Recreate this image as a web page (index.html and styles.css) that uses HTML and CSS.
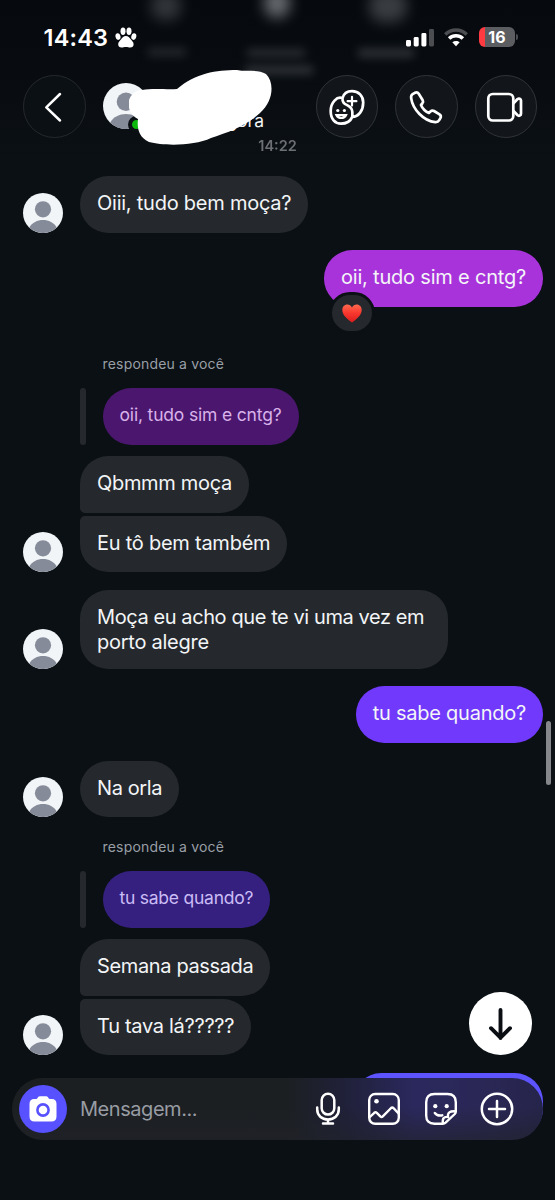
FILE: index.html
```html
<!DOCTYPE html>
<html lang="pt-BR">
<head>
<meta charset="utf-8">
<title>Mensagens</title>
<link rel="stylesheet" href="styles.css">
</head>
<body>
<svg class="defs" width="0" height="0">
  <symbol id="person" viewBox="0 0 40 40">
    <circle cx="20" cy="20" r="20" fill="#f1f5f8"/>
    <circle cx="20" cy="16.3" r="8.1" fill="#858b98"/>
    <path d="M6.2 34.5C9.2 29.5 14.2 27 20 27s10.800 2.500 13.800 7.500A20 20 0 0 1 6.200 34.500z" fill="#858b98"/>
  </symbol>
</svg>
<div class="phone">
  <div class="ghosts">
    <i class="ghost g1"></i><i class="ghost g2"></i><i class="ghost g3"></i>
    <i class="ghost g4"></i><i class="ghost g5"></i><i class="ghost g6"></i><i class="ghost g7"></i>
  </div>

  <div class="status">
    <span class="clock">14:43</span>
    <svg class="paw" width="22" height="21" viewBox="0 0 22 21" fill="#fff">
      <ellipse cx="8" cy="4.200" rx="2.500" ry="3.700"/><ellipse cx="14" cy="4.200" rx="2.500" ry="3.700"/>
      <ellipse cx="3" cy="9.600" rx="2.500" ry="3.300" transform="rotate(-12 3 9.600)"/><ellipse cx="18.800" cy="9.600" rx="2.500" ry="3.300" transform="rotate(12 18.800 9.600)"/>
      <path d="M10.900 8.900c2.400 0 3.500 1.600 4.800 3.300 1.500 1.900 2.900 2.900 2.900 5 0 2.200-1.400 3.300-3.400 3.300-1.500 0-2.400-.5-4.300-.5s-2.800.5-4.300.5c-2 0-3.400-1.100-3.400-3.300 0-2.100 1.400-3.100 2.900-5 1.300-1.700 2.400-3.300 4.800-3.300z"/>
    </svg>
    <svg class="signal" width="29" height="19" viewBox="0 0 29 19" fill="#fff">
      <rect x="0" y="12" width="5" height="6.500" rx="1.400"/><rect x="7.700" y="9" width="5" height="9.500" rx="1.400"/>
      <rect x="15.400" y="5" width="5" height="13.500" rx="1.400"/><rect x="23" y="1" width="5" height="17.500" rx="1.400" fill="#4b4d50"/>
    </svg>
    <svg class="wifi" width="24" height="19" viewBox="0 0 24 19" fill="none" stroke-width="3.500">
      <path d="M1.300 6.500C7.300.6 16.700.6 22.700 6.500" stroke="#4b4d50"/>
      <path d="M5.100 10.600c4-3.800 9.800-3.800 13.800 0" stroke="#fff"/>
      <path d="M8.300 14.300c2.200-1.900 5.200-1.900 7.400 0L12 18.200z" fill="#fff"/>
    </svg>
    <div class="battery"><span>16</span></div>
  </div>

  <header class="nav">
    <div class="round back">
      <svg width="62" height="62" viewBox="0 0 62 62" fill="none" stroke="#fff" stroke-width="2.500" stroke-linecap="round" stroke-linejoin="round"><path d="M36 18 22.300 31.300 36 44.500"/></svg>
    </div>
    <div class="profile">
      <svg class="face" width="46" height="46"><use href="#person"/></svg>
      <i class="online"></i>
      <span class="active">agora</span>
      <svg class="scribble" width="146" height="78" viewBox="0 0 146 78"><path fill="#fff" d="M13 21C25 19 39 21 48 20C67 4 87 1 108 1C117 3 129 0 137 5C146 14 144 33 131 44C117 57 100 63 82 69C65 77 35 77 20 73C9 68 8 58 9 50C-2 45-3 30 4 25Q7 21 13 21z"/></svg>
    </div>
    <div class="round">
      <svg width="62" height="62" viewBox="0 0 62 62" fill="none" stroke="#fff" stroke-width="2.700" stroke-linecap="round">
        <path d="M26.500 22.200C21 20 14.700 26.500 14.700 35c0 8 4.300 12.700 10.300 12.700 5.600 0 9.500-2.600 11.300-6.800M26.500 22.200c1.100-4.200 4.700-7 9.500-7 6.700 0 11.200 4.700 11.200 11.200 0 8-4.500 14.500-10.900 14.500M26.500 22.200c-.9 8.500 9.500 5.300 9.800 13.500.1 1.800 0 3.500 0 5.200"/>
        <path d="M36 20.800v8.800M31.600 25.200h8.800M20.500 39.200c1.800 3.700 7.700 3.700 9.500 0z" stroke-width="2.200"/>
        <circle cx="21.800" cy="34.500" r="1.600" fill="#fff" stroke="none"/><circle cx="28.400" cy="34.500" r="1.600" fill="#fff" stroke="none"/>
      </svg>
    </div>
    <div class="round">
      <svg width="62" height="62" viewBox="0 0 62 62" fill="none" stroke="#fff" stroke-width="2.700" stroke-linejoin="round"><path d="M18.900 16.800l-2.300 1.400c-1.500.9-1.700 2.200-1.400 4.200 1.600 11 12.500 22.700 24 23.700 2.300.2 3.200-.5 4-1.900l1.300-2.300c.7-1.500.3-2.600-1-3.500l-5.500-3.400c-1.400-.8-2.500-.5-3.600.5l-1.500 1.400c-3.200-1.300-6.600-4.700-7.900-7.900l1.300-1.500c.9-1.100 1.100-2.200.3-3.500L22.700 17.700c-1-1.500-2.300-1.700-3.800-.9z"/></svg>
    </div>
    <div class="round">
      <svg width="62" height="62" viewBox="0 0 62 62" fill="none" stroke="#fff" stroke-width="2.700" stroke-linejoin="round"><rect x="13.300" y="18" width="25" height="26.500" rx="4.500"/><path d="M38.300 27.500l4.300-4.500c1.300-1 3.400-.3 3.400 1.500v13.300c0 1.800-2.100 2.500-3.400 1.500l-4.300-4.500"/></svg>
    </div>
  </header>

  <main class="chat">
    <div class="time">14:22</div>
    <div class="row first"><svg class="avatar"><use href="#person"/></svg><div class="bubble s1">Oiii, tudo bem moça?</div></div>
    <div class="row mine"><div class="bubble magenta s2">oii, tudo sim e cntg?
      <span class="reaction"><svg width="20" height="19" viewBox="0 0 20 19"><defs><linearGradient id="h" x2="0" y2="1"><stop stop-color="#ff6a50"/><stop offset=".45" stop-color="#fa392f"/><stop offset="1" stop-color="#d91b1d"/></linearGradient></defs><path fill="url(#h)" d="M10 18.600C5 14.800.3 10.800.3 5.900.3 2.800 2.500.5 5.300.5 7.400.5 9 1.600 10 3.600 11 1.600 12.600.5 14.700.5c2.800 0 5 2.300 5 5.400 0 4.900-4.700 8.900-9.700 12.700z"/></svg></span></div></div>
    <div class="replied far">respondeu a você</div>
    <div class="quote"><div class="bubble plum s3">oii, tudo sim e cntg?</div></div>
    <div class="row after-quote"><div class="bubble top s4">Qbmmm moça</div></div>
    <div class="row joined"><svg class="avatar"><use href="#person"/></svg><div class="bubble bottom s5">Eu tô bem também</div></div>
    <div class="row"><svg class="avatar"><use href="#person"/></svg><div class="bubble s6">Moça eu acho que te vi uma vez em<br><span class="line2">porto alegre</span></div></div>
    <div class="row mine"><div class="bubble violet s7">tu sabe quando?</div></div>
    <div class="row"><svg class="avatar"><use href="#person"/></svg><div class="bubble s8">Na orla</div></div>
    <div class="replied">respondeu a você</div>
    <div class="quote"><div class="bubble indigo s9">tu sabe quando?</div></div>
    <div class="row after-quote"><div class="bubble top s10">Semana passada</div></div>
    <div class="row joined"><svg class="avatar"><use href="#person"/></svg><div class="bubble bottom s11">Tu tava lá?????</div></div>
    <div class="row mine"><div class="bubble blue"></div></div>
  </main>

  <i class="scrollbar"></i>
  <div class="jump"><svg width="63" height="63" viewBox="0 0 63 63" fill="none" stroke="#0b0f14" stroke-width="3.900" stroke-linecap="round" stroke-linejoin="round"><path d="M31.500 18v28M22 36.200l9.500 9.500 9.500-9.500"/></svg></div>

  <footer class="composer">
    <div class="camera"><svg width="28" height="26" viewBox="0 0 28 26"><path fill="#fff" d="M8.500 2C9.300.6 10.400.3 12 .3h4c1.600 0 2.700.3 3.500 1.700.4.800.8 1 1.800 1h1.500c3 0 4.700 1.700 4.700 4.700V20.500c0 3.300-1.700 5-5 5h-17c-3.300 0-5-1.700-5-5V7.700C.5 4.700 2.200 3 5.200 3h1.500c1 0 1.400-.2 1.800-1z"/><circle cx="14" cy="14" r="5.600" fill="none" stroke="#5851ff" stroke-width="2.600"/></svg></div>
    <span class="placeholder">Mensagem...</span>
    <div class="tools">
      <svg width="34" height="34" viewBox="0 0 34 34" fill="none" stroke="#fff" stroke-width="2.500" stroke-linecap="round"><rect x="10.700" y="1.800" width="12.600" height="20.800" rx="6.300"/><path d="M6.200 15.500v1.800c0 6.200 4.600 10.200 10.800 10.200s10.800-4 10.800-10.200v-1.800M17 27.500v4M12 31.600h10"/></svg>
      <svg width="34" height="34" viewBox="0 0 34 34" fill="none" stroke="#fff" stroke-width="2.400" stroke-linejoin="round"><rect x="2.200" y="2" width="29.600" height="29.800" rx="6"/><path d="M2.300 25.500l5-4.700q1.300-1 2.500.1l3.500 3.500q1.300 1.200 2.500 0l8.300-8.400q1.100-1 2.300 0l5.400 5.700"/><circle cx="9.500" cy="9.300" r="2.300" fill="#fff" stroke="none"/></svg>
      <svg width="34" height="34" viewBox="0 0 34 34" fill="none" stroke="#fff" stroke-width="2.400" stroke-linejoin="round" stroke-linecap="round"><path d="M18.800 31.700H10.500c-5.500 0-8.300-2.800-8.300-8.300V10.300c0-5.500 2.800-8.300 8.300-8.300h13c5.500 0 8.300 2.800 8.300 8.300v9.200c0 1-.3 1.700-1 2.500l-9.200 8.700c-.8.700-1.700 1-2.800 1zM18.800 31.700c-.5-5.700 1.200-7.200 5.200-6.700-.7-4.300 1.800-6.200 7.700-5.700M10.800 21c1.600 2.200 4.300 3 7.500 2.300"/><circle cx="11.300" cy="14.200" r="2.100" fill="#fff" stroke="none"/><circle cx="22.700" cy="14.200" r="2.100" fill="#fff" stroke="none"/></svg>
      <svg width="34" height="34" viewBox="0 0 34 34" fill="none" stroke="#fff" stroke-width="2.500" stroke-linecap="round"><circle cx="17" cy="17" r="15.200"/><path d="M17 9v16M9 17h16"/></svg>
    </div>
  </footer>
</div>
</body>
</html>
```
FILE: styles.css
```css
* { box-sizing: border-box; }
body { margin: 0; background: #0b1014; color: #f3f5f7; font-family: Inter, "Liberation Sans", sans-serif; }
svg { display: block; flex: none; }
.defs { position: absolute; }
.phone { position: relative; width: 555px; height: 1200px; overflow: hidden; background: linear-gradient(#06090d 0, #080c11 70px, #0b1014 160px); }

.ghosts { position: absolute; inset: 0; }
.ghost { position: absolute; background: #85898d; filter: blur(7px); opacity: .34; }
.g1 { left: 151px; top: -8px; width: 30px; height: 28px; border-radius: 12px; }
.g2 { left: 264px; top: -12px; width: 26px; height: 30px; border-radius: 13px; opacity: .75; }
.g3 { left: 369px; top: -10px; width: 38px; height: 32px; border-radius: 14px; opacity: .4; }
.g4 { left: 148px; top: 48px; width: 38px; height: 8px; opacity: .24; filter: blur(5px); }
.g5 { left: 247px; top: 49px; width: 58px; height: 8px; opacity: .28; filter: blur(5px); }
.g6 { left: 245px; top: 66px; width: 68px; height: 8px; opacity: .34; filter: blur(5px); }
.g7 { left: 358px; top: 49px; width: 56px; height: 8px; opacity: .34; filter: blur(5px); }

.status { position: relative; display: flex; align-items: center; height: 75px; padding: 0 40px 1px 43.500px; }
.clock { width: 66px; font-size: 23.500px; font-weight: 600; letter-spacing: .2px; color: #fff; }
.paw { margin-left: 5.500px; }
.signal { margin-left: auto; }
.wifi { margin-left: 9px; }
.battery { position: relative; width: 36px; height: 20px; margin-left: 11px; border-radius: 6px; background: linear-gradient(90deg, #ff3b41 6px, #5c5d61 6px); color: #fff; text-align: center; font: 700 16px/20px Inter, sans-serif; }
.battery::after { content: ""; position: absolute; left: 37px; top: 7px; width: 2px; height: 6px; border-radius: 0 2px 2px 0; background: #4b4d50; }

.nav { position: relative; display: flex; gap: 17px; height: 63px; padding: 0 18px 0 23px; }
.round { width: 62.500px; height: 62.500px; border: 1px solid #303438; border-radius: 50%; background: #12161a; flex: none; }
.round > svg { margin: -.5px; }
.back { background: #0b1014; border-color: #25292e; }
.profile { position: relative; flex: 1; }
.face { margin-top: 8px; }
.online { position: absolute; left: 25px; top: 41px; width: 17px; height: 17px; border: 4px solid #0b1014; border-radius: 50%; background: #0db80d; }
.active { position: absolute; right: 34.500px; top: 35.500px; font-size: 17.500px; line-height: 20px; }
.scribble { position: absolute; left: 26px; top: -6px; }

.chat { position: relative; padding: 0 12px 0 23px; }
.time { height: 16px; text-align: center; font-size: 14.500px; line-height: 16px; font-weight: 600; color: #6c7074; filter: blur(.6px); transform: translateX(-5.500px); }
.row { position: relative; display: flex; justify-content: flex-start; align-items: flex-end; margin-top: 17.500px; padding-left: 57px; }
.row.first { margin-top: 22px; }
.row.mine { justify-content: flex-end; }
.row.after-quote { margin-top: 11.500px; }
.row.joined { margin-top: 3px; }
.avatar { width: 40px; height: 40px; margin-left: -57px; margin-right: 17px; }
.bubble { position: relative; min-height: 56.600px; padding: 15px 17px 13px; border-radius: 28.300px; background: #25292d; font-size: 20px; line-height: 25.500px; white-space: nowrap; }
.top { border-bottom-left-radius: 5px; }
.bottom { border-top-left-radius: 5px; }
.magenta { background: #a933db; }
.violet { background: #7139fb; }
.plum { background: #4b176e; color: #d8b2ea; }
.indigo { background: #352080; color: #cbbcf5; }
.blue { background: #5d54ff; width: 190px; height: 64px; }

/* optical tracking per message */
.s1 { letter-spacing: -.24px; }
.s2 { letter-spacing: -.2px; }
.s3 { letter-spacing: -.17px; }
.s4 { letter-spacing: -.32px; }
.s5 { letter-spacing: -.25px; }
.s6 { width: 368px; letter-spacing: -.41px; }
.line2 { letter-spacing: -.25px; }
.s7 { letter-spacing: -.24px; }
.s8 { letter-spacing: -.4px; }
.s9 { letter-spacing: -.24px; }
.s10 { letter-spacing: -.36px; }
.s11 { letter-spacing: -.3px; }

.reaction { position: absolute; left: 5px; top: 42px; display: flex; align-items: center; justify-content: center; width: 46px; height: 42px; border: 3px solid #0b1014; border-radius: 21px; background: #25292d; }
.replied { height: 20px; margin: 20px 0 14px 79.500px; font-size: 14px; line-height: 20px; letter-spacing: .18px; color: #999fa6; }
.replied.far { margin-top: 47.500px; }
.quote { display: flex; margin-left: 57px; gap: 17px; }
.quote::before { content: ""; width: 5.500px; border-radius: 3px; background: #25292d; }
.quote .bubble { padding-top: 14px; font-size: 17.500px; }

.scrollbar { position: absolute; left: 546px; top: 721px; width: 4.500px; height: 64px; border-radius: 3px; background: #85878a; }
.jump { position: absolute; left: 469px; top: 992px; width: 63px; height: 63px; border-radius: 50%; background: #fff; }
.composer { position: absolute; left: 12px; right: 12px; top: 1078px; height: 62px; display: flex; align-items: center; padding: 0 29px 0 7px; border-radius: 31px; background: linear-gradient(180deg, transparent 45%, rgba(32, 34, 40, .6)), linear-gradient(90deg, #1c1f22 52%, #20213a 63%, #2b285e 76%, #2a2755 90%, #25244a); }
.camera { display: grid; place-items: center; width: 48px; height: 48px; border-radius: 50%; background: #5851ff; }
.placeholder { margin-left: 13px; font-size: 20px; letter-spacing: -.45px; color: #989ca3; }
.tools { display: flex; gap: 22.500px; margin-left: auto; }
```
